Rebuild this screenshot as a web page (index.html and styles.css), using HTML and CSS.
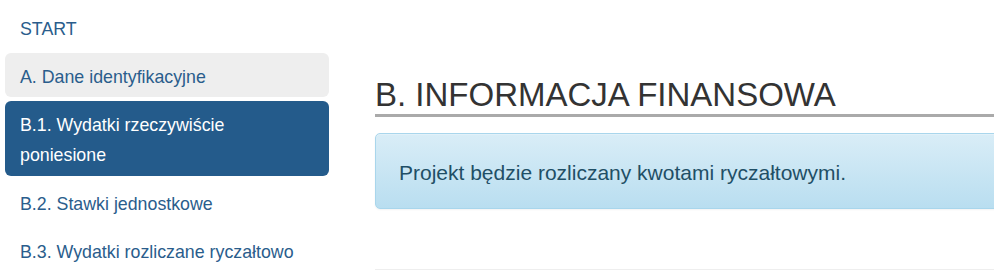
FILE: index.html
```html
<!DOCTYPE html>
<html lang="pl">
<head>
<meta charset="utf-8">
<link rel="stylesheet" href="styles.css">
</head>
<body>
<div class="page">
  <nav class="sidebar">
    <ul class="pills">
      <li><a href="#">START</a></li>
      <li class="done"><a href="#">A. Dane identyfikacyjne</a></li>
      <li class="active"><a href="#">B.1. Wydatki rzeczywiście poniesione</a></li>
      <li><a href="#">B.2. Stawki jednostkowe</a></li>
      <li><a href="#">B.3. Wydatki rozliczane ryczałtowo</a></li>
    </ul>
  </nav>
  <main class="content">
    <h2 class="title">B. INFORMACJA FINANSOWA</h2>
    <div class="alert">Projekt będzie rozliczany kwotami ryczałtowymi.</div>
    <hr class="sep">
  </main>
</div>
</body>
</html>
```
FILE: styles.css
```css
html, body {
  margin: 0;
  padding: 0;
  background: #fff;
  overflow: hidden;
}
body {
  font-family: "Liberation Sans", Arial, sans-serif;
  color: #333;
}
.page {
  display: flex;
  gap: 46px;
  padding-left: 5px;
  padding-top: 5px;
}
.sidebar {
  flex: 0 0 324px;
}
.pills {
  list-style: none;
  margin: 0;
  padding: 0;
  display: flex;
  flex-direction: column;
  gap: 4px;
}
.pills a {
  display: block;
  padding: 9px 15px 5px;
  font-size: 17.8px;
  line-height: 30px;
  color: #2a5d8c;
  text-decoration: none;
  border-radius: 6px;
}
.pills .active a {
  padding-bottom: 6px;
}
.pills .done a {
  background: #eeeeee;
}
.pills .active a {
  background: #245b8b;
  color: #fff;
}
.content {
  flex: 0 0 760px;
}
.title {
  margin: 0;
  padding-top: 71px;
  font-size: 33px;
  font-weight: normal;
  line-height: 38px;
  color: #333;
  border-bottom: 3px solid #aaaaaa;
  padding-bottom: 0;
}
.alert {
  margin-top: 16px;
  padding: 3px 23px 0;
  height: 71px;
  display: flex;
  align-items: center;
  font-size: 21px;
  color: #1f4f66;
  background: linear-gradient(to bottom, #d9edf7 0%, #b9def0 100%);
  border: 1px solid #a9d6ec;
  border-radius: 5px;
  box-shadow: inset 0 1px 0 rgba(255,255,255,.25), 0 1px 2px rgba(0,0,0,.05);
}
.sep {
  margin: 60px 0 0;
  border: 0;
  border-top: 1px solid #eeeeee;
}
```
